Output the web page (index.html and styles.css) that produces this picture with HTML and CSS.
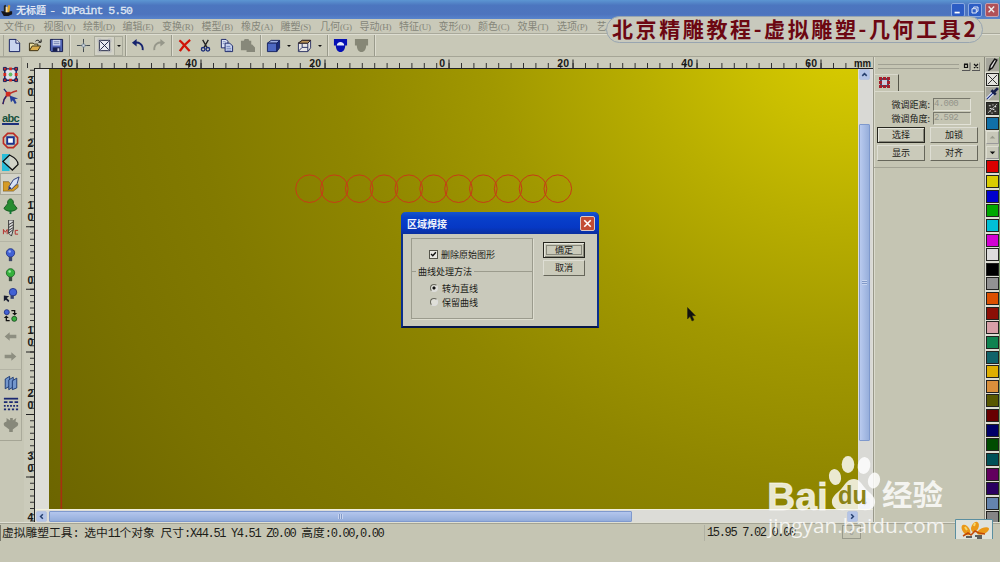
FILE: index.html
```html
<!DOCTYPE html>
<html lang="zh-CN">
<head>
<meta charset="utf-8">
<title>无标题 - JDPaint 5.50</title>
<link rel="stylesheet" href="styles.css">
</head>
<body>
<div class="app">
  <header class="titlebar">
    <svg class="app-icon" viewBox="0 0 14 14"><path d="M0 9h12v3l-4 2H3z" fill="#15151a"/><path d="M3 3l2-1 2 7H3z" fill="#222"/><path d="M8 2l2 1-1 7H6z" fill="#e2a020"/><path d="M5 4h2v6H5z" fill="#f0e0b0"/></svg>
    <span class="title">无标题 <span class="mono">- JDPaint 5.50</span></span>
    <div class="win-buttons">
      <span class="win-btn"><svg viewBox="0 0 14 14"><path d="M3 10h6" stroke="#fff" stroke-width="2"/></svg></span>
      <span class="win-btn"><svg viewBox="0 0 14 14"><path d="M5.500 5V3.500h5v5H9M3.500 5.500h5v5h-5z" fill="none" stroke="#fff"/></svg></span>
      <span class="win-btn close"><svg viewBox="0 0 14 14"><path d="M3 3l6.500 6.500M9.500 3L3 9.500" stroke="#eee" stroke-width="1.600"/></svg></span>
    </div>
  </header>
  <nav class="menubar">
    <span>文件<i>(F)</i></span><span>视图<i>(V)</i></span><span>绘制<i>(D)</i></span><span>编辑<i>(E)</i></span><span>变换<i>(R)</i></span><span>模型<i>(B)</i></span><span>橡皮<i>(A)</i></span><span>雕塑<i>(S)</i></span><span>几何<i>(G)</i></span><span>导动<i>(H)</i></span><span>特征<i>(U)</i></span><span>变形<i>(O)</i></span><span>颜色<i>(C)</i></span><span>效果<i>(T)</i></span><span>选项<i>(P)</i></span><span>艺</span>
  </nav>
  <div class="toolbar">
    <span class="grip"></span>
    <span class="tool"><svg viewBox="0 0 16 16"><path d="M2.500 1.500h7l4 4v9h-11z" fill="#c9d4ee" stroke="#101c60"/><path d="M9.500 1.500v4h4" fill="#fff" stroke="#101c60"/></svg></span>
    <span class="tool"><svg viewBox="0 0 16 16"><path d="M1.500 13V5.500h4l1 1h4V9" fill="#e8dca0" stroke="#332a10"/><path d="M1.500 13.500l3-5h9l-3 5z" fill="#d9ad4c" stroke="#332a10"/><path d="M8 3.500c2-2 4-1 5 1M11 4.500h3v-3" fill="none" stroke="#111"/></svg></span>
    <span class="tool"><svg viewBox="0 0 16 16"><path d="M1.500 1.500h13v13h-12l-1-1z" fill="#5265b5" stroke="#10184c"/><path d="M4 2h8v6H4z" fill="#cfd7ed"/><path d="M5 4h6M5 6h6" stroke="#6f80b0"/><path d="M4 10h8v4H4z" fill="#18204e"/><path d="M9 11h2v3H9z" fill="#ccd"/></svg></span>
    <span class="sep"></span>
    <span class="tool wide"><svg viewBox="0 0 16 16"><path d="M1 8h4M7 8h2M11 8h4M8 1v4M8 11v4M5 8h6M8 5v6" stroke="#39424a"/><path d="M6.500 6.500h3v3h-3z" fill="#ddd" stroke="#89a"/></svg></span>
    <span class="tool pressed"><svg viewBox="0 0 16 16"><path d="M2.500 2.500h11v11h-11zM3 3l10 10M13 3L3 13" fill="#e8eaf2" stroke="#1a2040"/><path d="M1 1h3v3H1zM12 1h3v3h-3zM1 12h3v3H1zM12 12h3v3h-3z" fill="none" stroke="#aab" stroke-width=".5"/></svg></span>
    <span class="drop pressed-drop"></span>
    <span class="sep"></span>
    <span class="tool narrow"><svg viewBox="0 0 16 16"><path d="M3 5.500c5-2 10 1 9.500 7.500" fill="none" stroke="#16246e" stroke-width="2"/><path d="M6 1v8L1 5z" fill="#16246e"/></svg></span>
    <span class="tool"><svg viewBox="0 0 16 16"><path d="M13 5.500c-5-2-10 1-9.500 7.500" fill="none" stroke="#96978a" stroke-width="2"/><path d="M10 1v8l5-4z" fill="#96978a"/></svg></span>
    <span class="sep"></span>
    <span class="tool"><svg viewBox="0 0 16 16"><path d="M2.500 2.500c3 2 7 7 11 11.500M14 2C9 6 6 9 3 14" fill="none" stroke="#d01408" stroke-width="2.400"/></svg></span>
    <span class="tool"><svg viewBox="0 0 16 16"><path d="M5 2l4.500 8M11 2L6.500 10" stroke="#222" stroke-width="1.400"/><circle cx="5.500" cy="12" r="1.900" fill="none" stroke="#1c2f78" stroke-width="1.400"/><circle cx="10.500" cy="12" r="1.900" fill="none" stroke="#1c2f78" stroke-width="1.400"/></svg></span>
    <span class="tool"><svg viewBox="0 0 16 16"><path d="M2.500 1.500h5l2 2v7h-7z" fill="#dde3f4" stroke="#182468"/><path d="M6.500 5.500h5l3 3v6h-8z" fill="#c6d1ee" stroke="#182468"/><path d="M8 9h4M8 11h5M8 13h5M4 4h3M4 6h2" stroke="#5468a8" stroke-width=".7"/></svg></span>
    <span class="tool"><svg viewBox="0 0 16 16"><path d="M1 3h3l1-2h4l1 2h2v4h1l3 3v5H7v-2H1z" fill="#87887a"/></svg></span>
    <span class="sep"></span>
    <span class="tool narrow"><svg viewBox="0 0 16 16"><path d="M1.500 5.500l4-3h9l-3 3z" fill="#9fb1e4" stroke="#172460"/><path d="M1.500 5.500h10v9h-10z" fill="#4d68c2" stroke="#172460"/><path d="M11.500 5.500l3-3v8l-3 4z" fill="#1d2e7e" stroke="#172460"/></svg></span>
    <span class="drop"></span>
    <span class="tool narrow"><svg viewBox="0 0 16 16"><path d="M1.500 5.500l4-3h9l-3 3z" fill="#b99157" stroke="#2b2024"/><path d="M1.500 5.500h10v9h-10zM11.500 5.500l3-3v8l-3 4" fill="#e6e4e4" stroke="#2a3162"/><path d="M5.500 6v4h6M5.500 10l-4 4" fill="none" stroke="#2a3162"/><path d="M1.500 5.500l4-3h9l-3 3z" fill="#b99157" stroke="#2b2024"/></svg></span>
    <span class="drop"></span>
    <span class="sep"></span>
    <span class="tool"><svg viewBox="0 0 16 16"><path d="M1 1h14v7h-2c0 4-2 7-5 7s-5-3-5-7H1z" fill="#0510b4"/><path d="M4 8c0-5 8-5 8 0z" fill="#e3e9fa"/></svg></span>
    <span class="tool"><svg viewBox="0 0 16 16"><path d="M1 1h14v7h-2c0 4-2 7-5 7s-5-3-5-7H1z" fill="#868776"/></svg></span>
    <span class="sep end"></span>
  </div>

  <main class="workspace">
    <aside class="toolbox">
      <div class="group">
        <span><svg viewBox="0 0 18 18"><path d="M3 3h12v12H3z" fill="#dfe2e8" stroke="#111c60" stroke-width="1.500"/><circle cx="9" cy="9" r="2" fill="#62bb62"/><g fill="#d42a20" stroke="#111c60"><path d="M1.500 1.500h3v3h-3zM13.500 1.500h3v3h-3zM1.500 13.500h3v3h-3zM13.500 13.500h3v3h-3z"/></g><path d="M7.500 1.500h3v3h-3zM7.500 13.500h3v3h-3zM1.500 7.500h3v3h-3zM13.500 7.500h3v3h-3z" fill="#d42a20"/></svg></span>
        <span><svg viewBox="0 0 18 18"><path d="M1 17c1-7 4-11 15-14" fill="none" stroke="#b8322a" stroke-width="1.600"/><path d="M2 1l4 5M1 17c.5-4 2-7 4-9" fill="none" stroke="#1b2872" stroke-width="1.400"/><path d="M4 4h5v5H4z" fill="#d02c20"/><path d="M8 8l9 3-3.500 1 2 4-2 1-2-4-2 2z" fill="#273f97"/></svg></span>
        <span class="abc">abc</span>
        <span><svg viewBox="0 0 18 18"><path d="M6 1.500h6L16.500 6v6L12 16.500H6L1.500 12V6z" fill="none" stroke="#bd2c24" stroke-width="1.700"/><path d="M5.500 5.500h7v7h-7z" fill="#fff" stroke="#1b338e" stroke-width="2"/></svg></span>
        <span><svg viewBox="0 0 18 18"><path d="M0 0h8v18H0z" fill="#27bdd8"/><path d="M1 8l7-7c4 2 9 6 9 10l-6 6z" fill="#d8dad0" fill-opacity=".7" stroke="#111" stroke-width="1.300"/></svg></span>
        <span class="active"><svg viewBox="0 0 18 18"><path d="M0 6h6l4 5 6-2v3l-5 4H0z" fill="#d59b26" stroke="#684812" stroke-width=".6"/><path d="M17 1l-6 3-5 8 3 2 6-6z" fill="#d8e2f4" stroke="#263776"/><path d="M7 11l2 2-4 2z" fill="#1c2f78"/></svg></span>
        <span><svg viewBox="0 0 18 18"><path d="M6 4c1-4 5-4 6 0v2l4 5c-3 4-11 4-14 0l4-5z" fill="#278c31" stroke="#14561e"/><path d="M8 13h2v4H8z" fill="#173"/></svg></span>
        <span><svg viewBox="0 0 18 18"><path d="M7 0h5v10l-2 7-3-3z" fill="#ddd" stroke="#333"/><path d="M7 5l5-3M7 8l5-3M7 11l5-3M7 14l5-4" stroke="#333"/><path d="M1.500 15v-5l2 3 2-3v5" stroke="#b52b28" fill="none"/><path d="M17 11h-3v4h3" stroke="#b52b28" fill="none"/></svg></span>
      </div>
      <div class="group bulbs">
        <span><svg viewBox="0 0 18 18"><circle cx="9" cy="7" r="5" fill="#4262d4" stroke="#1c2c82"/><circle cx="8" cy="5.500" r="1.500" fill="#9eb2f4"/><path d="M7 12h4v5H7z" fill="#3d4567"/></svg></span>
        <span><svg viewBox="0 0 18 18"><circle cx="9" cy="7" r="5" fill="#36b13d" stroke="#176421"/><circle cx="8" cy="5.500" r="1.500" fill="#9ce89e"/><path d="M7 12h4v5H7z" fill="#3c4c40"/></svg></span>
        <span><svg viewBox="0 0 18 18"><circle cx="12" cy="5" r="4.500" fill="#4262d4" stroke="#1c2c82"/><path d="M9 9h4v4H9z" fill="#354270"/><path d="M1 9v7l2.500-2 3 3 1-2-3-3 3-2z" fill="#171c30"/></svg></span>
        <span><svg viewBox="0 0 18 18"><circle cx="4.500" cy="5" r="3" fill="#4262d4" stroke="#1c2c82"/><circle cx="13.500" cy="13" r="3" fill="#36b13d" stroke="#14461d"/><path d="M10 3h4v4M8 15H4v-4" fill="none" stroke="#111" stroke-width="1.500"/><path d="M11 6h6l-3 3zM1 12h6L4 9z" fill="#111"/></svg></span>
        <span><svg viewBox="0 0 18 18"><path d="M2 9l6-5v3h8v4H8v3z" fill="#8d8e80"/></svg></span>
        <span><svg viewBox="0 0 18 18"><path d="M16 9l-6-5v3H2v4h8v3z" fill="#8d8e80"/></svg></span>
      </div>
      <div class="group last">
        <span><svg viewBox="0 0 18 18"><g fill="#7497cc" stroke="#17346f"><path d="M2.500 4.500l5-3v11l-5 3z"/><path d="M6.500 5.500l5-3v11l-5 3z"/><path d="M10.500 6.500l5-3v11l-5 2z"/></g></svg></span>
        <span><svg viewBox="0 0 18 18"><path d="M1 3h16" stroke="#1b2871" stroke-width="2"/><path d="M1 7h16" stroke="#1b2871" stroke-width="2" stroke-dasharray="4 2"/><path d="M1 11h16" stroke="#1b2871" stroke-width="2" stroke-dasharray="2 1.500"/><path d="M1 15h16" stroke="#1b2871" stroke-width="2" stroke-dasharray="2.500 2"/></svg></span>
        <span><svg viewBox="0 0 18 18"><path d="M4 1l4 3V1h3v3l4-3-1 4c4 1 4 4 1 6l-4 3v3H7v-3l-4-3c-3-2-3-5 1-6z" fill="#87887a"/></svg></span>
      </div>
    </aside>

    <section class="document">
      <svg class="ruler-h" width="849" height="12" viewBox="0 0 849 12">
        <path d="M3 8.500H840" stroke="#333" stroke-width="5" stroke-dasharray="1 11.400"/>
        <path d="M52.500 7H800" stroke="#222" stroke-width="9" stroke-dasharray="1 123"/>
        <path d="M10 11.500H849" stroke="#222"/>
        <g class="ruler-text" text-anchor="end"><text x="49" y="10">60</text><text x="173" y="10">40</text><text x="297" y="10">20</text><text x="421" y="10">0</text><text x="545" y="10">20</text><text x="669" y="10">40</text><text x="793" y="10">60</text><text x="847" y="10" textLength="17" lengthAdjust="spacingAndGlyphs">mm</text></g>
      </svg>
      <div class="doc-row">
        <svg class="ruler-v" width="11" height="453" viewBox="0 0 11 453">
          <path d="M8 .7V453" stroke="#333" stroke-width="4" stroke-dasharray="1 5.260"/>
          <path d="M6 32V453" stroke="#222" stroke-width="8" stroke-dasharray="1 61.600"/>
          <path d="M10.500 0V453" stroke="#222"/>
          <g class="ruler-text" text-anchor="middle"><text x="6.500" y="15">3</text><text x="6.500" y="27">0</text><text x="6.500" y="78">2</text><text x="6.500" y="90">0</text><text x="6.500" y="140">1</text><text x="6.500" y="152">0</text><text x="6.500" y="215">0</text><text x="6.500" y="265">1</text><text x="6.500" y="277">0</text><text x="6.500" y="328">2</text><text x="6.500" y="340">0</text><text x="6.500" y="391">3</text><text x="6.500" y="403">0</text><text x="6.500" y="452">4</text></g>
        </svg>
        <div class="view">
          <div class="view-row">
            <div class="canvas">
              <svg width="809" height="440" viewBox="49 69 809 440">
                <path d="M61.300 69V509" stroke="#a8300f" stroke-width="1.600"/>
                <g fill="none" stroke="#c63c16"><circle cx="309.500" cy="188.700" r="13.800"/><circle cx="334.300" cy="188.700" r="13.800"/><circle cx="359.200" cy="188.700" r="13.800"/><circle cx="384" cy="188.700" r="13.800"/><circle cx="408.800" cy="188.700" r="13.800"/><circle cx="433.600" cy="188.700" r="13.800"/><circle cx="458.500" cy="188.700" r="13.800"/><circle cx="483.300" cy="188.700" r="13.800"/><circle cx="508.100" cy="188.700" r="13.800"/><circle cx="533" cy="188.700" r="13.800"/><circle cx="557.800" cy="188.700" r="13.800"/></g>
              </svg>
            </div>
            <div class="scroll-v">
              <span class="arrow"><svg viewBox="0 0 10 10"><path d="M2.500 6.500L5 4l2.500 2.500" fill="none" stroke="#27406f" stroke-width="1.700"/></svg></span>
              <span class="thumb"><b></b></span>
              <span class="arrow"><svg viewBox="0 0 10 10"><path d="M2.500 3.500L5 6l2.500-2.500" fill="none" stroke="#27406f" stroke-width="1.700"/></svg></span>
            </div>
          </div>
          <div class="scroll-h">
            <span class="arrow"><svg viewBox="0 0 10 10"><path d="M6.500 2.500L4 5l2.500 2.500" fill="none" stroke="#27406f" stroke-width="1.700"/></svg></span>
            <span class="thumb"><b></b></span>
            <span class="arrow"><svg viewBox="0 0 10 10"><path d="M3.500 2.500L6 5 3.500 7.500" fill="none" stroke="#27406f" stroke-width="1.700"/></svg></span>
          </div>
        </div>
      </div>
    </section>

    <aside class="panel">
      <div class="panel-head"><i class="lines"></i><svg width="18" height="9" viewBox="0 0 18 9"><path d="M0 8.500h8v-8M10 8.500h8v-8" fill="none" stroke="#555"/><path d="M2.500 2.500h3v3h-3zM2 2h4M12 2l4 4M16 2l-4 4" fill="none" stroke="#111" stroke-width="1.200"/></svg></div>
      <div class="tab"><svg width="11" height="11" viewBox="0 0 11 11"><path d="M2 2h7v7H2z" fill="#ccd" stroke="#1c2050" stroke-width="1.500"/><path d="M0 0h3v3H0zM4 0h3v3H4zM8 0h3v3H8zM0 4h3v3H0zM8 4h3v3H8zM0 8h3v3H0zM4 8h3v3H4zM8 8h3v3H8z" fill="#a51e2c"/></svg></div>
      <div class="panel-body">
        <div class="field"><label>微调距离:</label><span class="input">4.000</span></div>
        <div class="field"><label>微调角度:</label><span class="input">2.592</span></div>
        <div class="buttons"><span class="btn default">选择</span><span class="btn">加锁</span><span class="btn">显示</span><span class="btn">对齐</span></div>
      </div>
    </aside>

    <aside class="palette">
      <span class="pal-tool"><svg viewBox="0 0 12 12"><path d="M3 11l1-4 4-6 2 1-4 7z" fill="#ddd" stroke="#111" stroke-width="1.300"/></svg></span>
      <span class="swatch none"><svg viewBox="0 0 12 12"><path d="M1 1l10 10M11 1L1 11" stroke="#222"/></svg></span>
      <span class="pal-tool"><svg viewBox="0 0 12 12"><path d="M1 11l6-6" stroke="#dfe6fa" stroke-width="3"/><path d="M1 11l6-6" stroke="#172a7c"/><path d="M5 3l4 4M7 5l4-4" stroke="#16204c" stroke-width="2.500"/></svg></span>
      <span class="swatch grain"><svg viewBox="0 0 12 12"><path d="M2 3h2M6 2h1M8 4h2M3 6h2M6 7h2M2 9h2M8 9h2M5 11h1" stroke="#ddd" stroke-width="1.300"/><path d="M1 11L11 1" stroke="#aaa"/></svg></span>
      <span class="swatch c-steel"></span>
      <span class="pal-step"><svg viewBox="0 0 12 12"><path d="M6 4l3 3H3z" fill="#999a8c"/></svg></span>
      <span class="pal-step"><svg viewBox="0 0 12 12"><path d="M3 5h6L6 8z" fill="#111"/></svg></span>
      <span class="swatch c-red"></span><span class="swatch c-yellow"></span><span class="swatch c-blue"></span><span class="swatch c-green"></span><span class="swatch c-cyan"></span><span class="swatch c-magenta"></span><span class="swatch c-white"></span><span class="swatch c-black"></span><span class="swatch c-gray"></span><span class="swatch c-orange"></span><span class="swatch c-brick"></span><span class="swatch c-pink"></span><span class="swatch c-jade"></span><span class="swatch c-teal"></span><span class="swatch c-gold"></span><span class="swatch c-tan"></span><span class="swatch c-olive"></span><span class="swatch c-maroon"></span><span class="swatch c-navy"></span><span class="swatch c-forest"></span><span class="swatch c-deepteal"></span><span class="swatch c-purple"></span><span class="swatch c-indigo"></span><span class="swatch c-slate"></span><span class="swatch c-dim"></span>
    </aside>
  </main>

  <footer class="statusbar">
    <span class="status-main">虚拟雕塑工具<span class="mono">: </span>选中<span class="mono">11</span>个对象<span class="mono"> </span>尺寸<span class="mono">:X44.51 Y4.51 Z0.00 </span>高度<span class="mono">:0.00,0.00</span></span>
    <span class="status-pos mono">15.95 7.02 0.00</span>
    <span class="status-lamp">0</span>
  </footer>

  <div class="banner">北京精雕教程-虚拟雕塑-几何工具2</div>

  <div class="dialog">
    <div class="dialog-title"><span>区域焊接</span><span class="dialog-close"><svg viewBox="0 0 14 14"><path d="M3.500 3.500l7 7M10.500 3.500l-7 7" stroke="#fff" stroke-width="1.700"/></svg></span></div>
    <div class="dialog-body">
      <div class="options">
        <div class="option-top"><span class="check"><svg viewBox="0 0 8 8"><path d="M1.200 3.500l2 2 3.500-4" fill="none" stroke="#111" stroke-width="1.600"/></svg></span>删除原始图形</div>
        <div class="legend"><span>曲线处理方法</span></div>
        <div class="option"><span class="radio on"></span>转为直线</div>
        <div class="option"><span class="radio"></span>保留曲线</div>
      </div>
      <div class="dialog-actions"><span class="btn default ok">确定</span><span class="btn">取消</span></div>
    </div>
  </div>

  <svg class="cursor" viewBox="0 0 9 15"><path d="M.5 .5v11.500l2.500-2.500 2 4.500 2-1-2-4.300h3.500z" fill="#111" stroke="#2b2a10" stroke-width=".5"/></svg>

  <svg class="coin" width="38" height="20" viewBox="0 0 38 20"><path d="M.5 20V.5h37V20" fill="#dfe2dc" stroke="#5b8fa0"/><g fill="#ea9818"><ellipse cx="11" cy="11" rx="3.500" ry="6" transform="rotate(-35 11 11)"/><ellipse cx="20" cy="8" rx="3.500" ry="5.500" transform="rotate(25 20 8)"/><ellipse cx="28" cy="12" rx="3" ry="6.500" transform="rotate(65 28 12)"/></g><path d="M8 17l5-3 3 2 4-4 4 2 6 1" stroke="#c04808" stroke-width="1.500" fill="none"/><path d="M11 18h6m3-1h7m-5 2h5" stroke="#333" stroke-width="1.500"/><path d="M10 8l2 3M20 4l-1 3" stroke="#f8d868" stroke-width="2"/></svg>

  <svg class="watermark" width="184" height="86" viewBox="764 454 184 86">
    <g fill="#fff" fill-opacity=".82">
      <text class="wm-bai" x="767" y="510" textLength="61" lengthAdjust="spacingAndGlyphs">Bai</text>
      <ellipse cx="835" cy="477" rx="6" ry="8" transform="rotate(-12 835 477)"/><ellipse cx="848" cy="464.500" rx="6.300" ry="8.500"/><ellipse cx="864" cy="465.500" rx="6.300" ry="8.500" transform="rotate(10 864 465.500)"/><ellipse cx="874" cy="480.500" rx="6" ry="8" transform="rotate(15 874 480.500)"/>
      <path d="M854 479c5 0 7 4 11 9s11 8 10 15c-1 6-6 8-12 7-6-.8-12-.8-18 0-6 1-12-1-13-7-1-7 6-10 10-15s6-9 12-9z"/>
      <text class="wm-cn" x="882" y="506" textLength="61" lengthAdjust="spacingAndGlyphs">经验</text>
      <text class="wm-url" x="768" y="533" textLength="177" lengthAdjust="spacingAndGlyphs">jingyan.baidu.com</text>
    </g>
    <text class="wm-du" x="838" y="504" textLength="29" lengthAdjust="spacingAndGlyphs">du</text>
  </svg>
</div>
</body>
</html>
```
FILE: styles.css
```css
* { box-sizing: border-box; }

body {
  margin: 0;
  background: #c5c5b3;
  color: #1c1c18;
  font-family: "Noto Sans CJK SC", sans-serif;
  font-size: 9px;
}

.app {
  position: relative;
  width: 1000px;
  height: 562px;
  overflow: hidden;
  display: flex;
  flex-direction: column;
}

svg { display: block; flex: none; }

.mono {
  font-family: "Liberation Mono", monospace;
  font-size: 12px;
  letter-spacing: -1.340px;
  white-space: pre;
}

.titlebar {
  flex: none;
  height: 19px;
  display: flex;
  align-items: center;
  padding: 0 1px;
  background: linear-gradient(#5c96d2, #4c76bf 28%, #4d74be 75%, #5884cc);
  color: #dfe6f2;
}
.app-icon { width: 13px; height: 13px; }
.title { margin-left: 2px; flex: 1; font-size: 10px; font-weight: 700; line-height: 17px; }
.title .mono { font-size: 11.500px; letter-spacing: -1px; font-weight: 400; -webkit-text-stroke: 0.300px #dfe6f2; margin-left: 1px; }
.win-buttons { display: flex; gap: 3px; }
.win-btn {
  width: 14px; height: 14px;
  border: 1px solid #8aa9e0;
  border-radius: 2px;
  background: #2c5cc4;
}
.win-btn.close { background: #b05058; border-color: #c2a0b0; }

.menubar {
  flex: none;
  height: 15px;
  display: flex;
  padding-left: 4px;
  background: #c9c9b9;
  border-bottom: 1px solid #a9a99b;
  color: #85867a;
  font-size: 10px;
  line-height: 14px;
}
.menubar span { width: 39.5px; white-space: nowrap; }
.menubar i { font: 9px "Liberation Serif", serif; letter-spacing: -0.3px; }

.toolbar {
  flex: none;
  height: 23px;
  display: flex;
  align-items: center;
  background: #c8c8b7;
  border-top: 1px solid #deded2;
  border-bottom: 1px solid #a5a596;
}
.grip { width: 4px; height: 21px; margin-right: 0; border-right: 1px solid #a6a698; }
.tool { width: 21px; height: 20px; display: flex; align-items: center; justify-content: center; }
.tool svg { width: 15px; height: 15px; }
.tool.wide { width: 22px; }
.tool.narrow { width: 20px; }
.tool.pressed { width: 21px; border: 1px solid #aaab9c; background: #d2d2c6; }
.sep { width: 2px; height: 21px; margin: 0 1px 0 2px; border-left: 1px solid #999a8b; border-right: 1px solid #dddccf; }
.drop { width: 11px; display: flex; justify-content: center; }
.drop::after { content: ""; border: 2px solid transparent; border-top: 2.500px solid #111; border-bottom: 0; }
.drop.pressed-drop { width: 8px; height: 20px; align-items: center; border: 1px solid #aaab9c; border-left: 0; }

.workspace { flex: none; height: 465px; display: flex; }

.toolbox { width: 24px; background: #c7c7b6; }
.group {
  width: 22px;
  padding-top: 5px;
  height: 184px;
  border-right: 1px solid #aaaa9b;
  border-top: 1px solid #b4b4a5;
}
.group > span { display: flex; height: 22px; align-items: center; justify-content: center; }
.group svg { width: 17px; height: 17px; }
.group .active { background: #d3d3c8; border: 1px solid #aaaa9b; border-right: 0; }
.group .abc { font: 700 11px/12px "Liberation Sans", sans-serif; color: #17513c; letter-spacing: -0.7px; text-decoration: underline; text-decoration-color: #1d307c; text-decoration-thickness: 2px; }
.group.bulbs { height: 128px; padding-top: 2px; }
.group.bulbs > span { height: 20.500px; }
.group.bulbs svg { width: 15px; height: 15px; }
.group.last { height: 72px; padding-top: 2px; border-bottom: 1px solid #a5a595; }
.group.last > span { height: 21px; }
.group.last svg { width: 16px; height: 16px; }

.document { width: 849px; display: flex; flex-direction: column; background: #cbcbbb; }
.ruler-text { font: 700 10.500px "Liberation Sans", sans-serif; fill: #191917; }
.doc-row { display: flex; height: 453px; }
.view { width: 838px; display: flex; flex-direction: column; background: #deded8; }
.view-row { display: flex; height: 440px; }
.canvas {
  width: 809px;
  margin-left: 14px;
  background:
    radial-gradient(ellipse 820px 720px at 809px -40px, #dccf00 0%, #cabf00 14%, #b8ae00 27%, #a19800 45%, #8f8600 64%, #827a00 82%, #7a7200 98%, #6b6400 120%);
}
.scroll-v { width: 13px; margin-left: 1px; display: flex; flex-direction: column; background: #d9d9d5; }
.arrow { flex: none; width: 11px; height: 11px; border: 1px solid #b8c5de; border-radius: 2px; background: #b4c4e7; }
.thumb { display: flex; align-items: center; justify-content: center; background: linear-gradient(90deg, #b9caee, #96aedb); border: 1px solid #7f99cd; border-radius: 1px; }
.thumb b { width: 5px; height: 5px; background: repeating-linear-gradient(#c8d5f0 0 1px, #8199c8 1px 2px); }
.scroll-v .thumb { width: 11px; height: 317px; margin: 44px 0 57px; }
.scroll-h { height: 13px; display: flex; align-items: center; padding-left: 1px; background: #dcdcd7; border-top: 1px solid #f0f0dc; }
.scroll-h .thumb { width: 583px; height: 11px; margin: 0 215px 0 2px; background: linear-gradient(#b3c6ed, #94addb); }
.scroll-h .thumb b { background: repeating-linear-gradient(90deg, #c8d5f0 0 1px, #8199c8 1px 2px); }

.panel { width: 112px; border-left: 1px solid #99998b; background: #c5c5b3; box-shadow: inset 1px 0 #dbdbcd; border-right: 1px solid #88887a; }
.panel-head { height: 17px; display: flex; align-items: center; padding: 1px 4px 0 4px; gap: 3px; }
.lines { flex: 1; height: 5px; border: 1px solid #a0a092; border-left: 0; border-right: 0; }
.tab { width: 24px; height: 17px; margin-left: 1px; padding: 2px 0 0 4px; border-right: 1px solid #555549; border-top: 1px solid #d9d9cc; }
.panel-body { height: 77px; padding: 6px 5px 0 3px; border-top: 1px solid #dadacd; border-bottom: 1px solid #a3a394; }
.field { display: flex; height: 14px; justify-content: flex-end; gap: 3px; padding-right: 8px; line-height: 13px; }
.field label { white-space: nowrap; }
.field .input { width: 38px; height: 13px; border: 1px solid #77776b; border-right-color: #e2e2d7; border-bottom-color: #e2e2d7; color: #93948a; font: 9px/11px "Liberation Mono", monospace; letter-spacing: -0.6px; }
.buttons { display: grid; grid-template-columns: 48px 48px; gap: 2px 5px; margin-top: 1px; }
.btn {
  height: 16px;
  text-align: center;
  line-height: 13px;
  border: 1px solid #deded4;
  border-right-color: #66665a;
  border-bottom-color: #66665a;
  background: #cacaba;
}
.btn.default { border: 1px solid #26261f; box-shadow: inset 1px 1px #e6e6dc, inset -1px -1px #88887b; }

.palette { width: 15px; padding: 1px 0 0 1px; display: flex; flex-direction: column; overflow: hidden; background: #c8c8b9; border-right: 1px solid #779966; }
.palette > span { flex: none; width: 13px; height: 13px; margin-bottom: 1.640px; }
.swatch { border: 1px solid #22221f; outline: 1px solid #dcdcd2; }
.pal-tool { background: #a6a69c; }
.pal-step { border: 1px solid #dcdcd0; border-right-color: #999; border-bottom-color: #999; }
.none { background: #e2e2dd; }
.grain { background: #34342f; }
.c-steel { background: #1070a8; }
.c-red { background: #d90000; }
.c-yellow { background: #d9cc00; }
.c-blue { background: #0000cf; }
.c-green { background: #00a800; }
.c-cyan { background: #00c0d6; }
.c-magenta { background: #d200d2; }
.c-white { background: #dcdcdc; }
.c-black { background: #000; }
.c-gray { background: #929292; }
.c-orange { background: #dc5000; }
.c-brick { background: #8c0f06; }
.c-pink { background: #d8a0a8; }
.c-jade { background: #0f8350; }
.c-teal { background: #10636a; }
.c-gold { background: #deaf00; }
.c-tan { background: #d98f3b; }
.c-olive { background: #585800; }
.c-maroon { background: #680000; }
.c-navy { background: #000068; }
.c-forest { background: #004c00; }
.c-deepteal { background: #005158; }
.c-purple { background: #62005e; }
.c-indigo { background: #2a0060; }
.c-slate { background: #6484ae; }
.c-dim { background: #858585; }

.statusbar {
  flex: 1;
  display: flex;
  align-items: flex-start;
  padding-top: 2px;
  border-top: 1px solid #e0e0d4;
  box-shadow: inset 0 1px #a4a495;
  font-size: 11.750px;
  line-height: 14px;
}
.status-main { width: 704px; padding-left: 1px; border-left: 1px solid #77776b; white-space: nowrap; }
.status-pos { width: 138px; padding-left: 2px; border-left: 1px solid #b0b0a2; line-height: 16px; }
.status-lamp { width: 19px; height: 14px; text-align: center; font-size: 8px; line-height: 11px; border: 1px solid #999a8c; color: #999; }

.banner {
  position: absolute;
  left: 606px; top: 16px;
  width: 377px; height: 27px;
  padding-left: 5px;
  border: 1px solid #98a5b0;
  border-radius: 14px;
  background: #c8c9bd;
  color: #6c0712;
  font-size: 21px;
  font-weight: 700;
  line-height: 23px;
  letter-spacing: 2.620px;
  white-space: nowrap;
}

.dialog {
  position: absolute;
  left: 401px; top: 212px;
  width: 198px; height: 116px;
  border: 2px solid #0a2e8c;
  border-bottom-color: #06164a;
  border-top: 0;
  border-radius: 5px 5px 0 0;
  background: #c9c9bb;
}
.dialog-title {
  display: flex;
  justify-content: space-between;
  align-items: center;
  height: 22px;
  margin: 0 -2px;
  padding: 1px 4px 0 6px;
  border-radius: 5px 5px 0 0;
  background: linear-gradient(#1656cb, #0840cb 25%, #0638c4 70%, #0a2f9e);
  color: #eef1fa;
  font-size: 10px;
  font-weight: 700;
}
.dialog-close { width: 15px; height: 15px; border: 1px solid #dcc8c4; border-radius: 2px; background: #c34c34; }
.dialog-body { display: flex; padding: 4px 8px 0 8px; }
.options { width: 122px; height: 81px; border: 1px solid #9b9b8d; box-shadow: 1px 1px #ddddd0; }
.option-top { display: flex; align-items: center; height: 30px; padding: 1px 0 0 17px; gap: 3px; }
.check { width: 9px; height: 9px; border: 1px solid #55554b; background: #e8e8e2; }
.legend { display: flex; align-items: center; height: 5px; }
.legend::before { content: ""; width: 4px; border-top: 1px solid #9b9b8d; }
.legend::after { content: ""; flex: 1; border-top: 1px solid #9b9b8d; }
.legend span { padding: 0 2px; line-height: 12px; }
.option { display: flex; align-items: center; height: 14px; padding-left: 18px; gap: 4px; }
.legend + .option { margin-top: 7px; }
.radio { width: 8px; height: 8px; border: 1px solid #66665b; border-right-color: #ddd; border-bottom-color: #ddd; border-radius: 50%; background: #dfdfd8; }
.radio.on { background: radial-gradient(circle, #111 0 1.300px, #dfdfd8 1.800px); }
.dialog-actions { display: flex; flex-direction: column; gap: 2px; width: 42px; margin: 4px 0 0 10px; }
.ok { outline: 1px solid #88887b; outline-offset: -4px; }

.cursor { position: absolute; left: 687px; top: 307px; width: 9px; height: 15px; }
.coin { position: absolute; left: 955px; top: 519px; }
.watermark { position: absolute; left: 764px; top: 454px; }
.wm-bai { font: 700 39px "Liberation Sans", sans-serif; stroke: #fff; stroke-opacity: .6; stroke-width: .8px; }
.wm-cn { font: 700 29px "Noto Sans CJK SC", sans-serif; }
.wm-url { font: 20px "Open Sans", "Noto Sans", sans-serif; }
.wm-du { font: 700 25px "Liberation Sans", sans-serif; fill: #8c8418; }
```
